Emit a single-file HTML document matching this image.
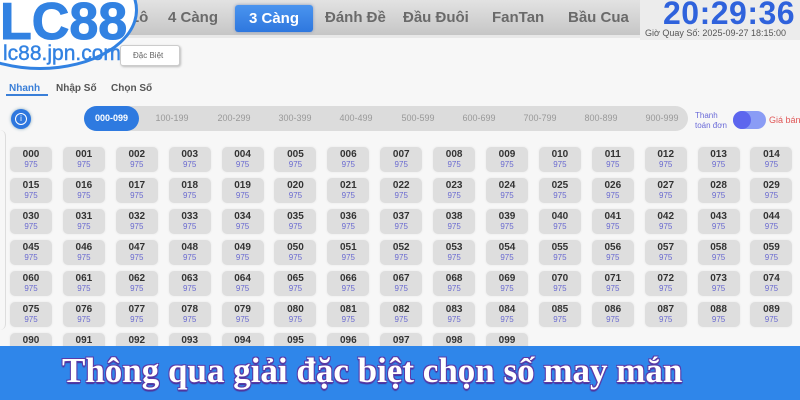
<!DOCTYPE html>
<html><head><meta charset="utf-8"><style>
*{margin:0;padding:0;box-sizing:border-box}
body{width:800px;height:400px;overflow:hidden;background:#f7f7f7;font-family:"Liberation Sans",Arial,sans-serif;position:relative}
.nav{position:absolute;left:0;top:0;width:640px;height:38px;background:linear-gradient(#e2e2e2,#c6c6c6);border-bottom:3px solid #e8e8e8}
.nav span{position:absolute;top:9px;font-size:15px;font-weight:bold;color:#6a6a6a}
.nav .act{top:5px;height:27px;padding:0 14px;line-height:27px;background:linear-gradient(#4a94ef,#2e77de);color:#fff;border-radius:3px;box-shadow:0 0 3px #89b}
.clock{position:absolute;left:640px;top:0;width:160px;height:40px;background:#ececec}
.time{position:absolute;left:23px;top:-5px;font-size:32px;font-weight:bold;color:#2f62dc;letter-spacing:0.5px}
.sub{position:absolute;left:5px;top:28px;font-size:9px;color:#555;white-space:nowrap}
.logo{position:absolute;left:-58px;top:-50px;width:196px;height:120px;border-radius:50%;background:#fff;border:3px solid #3282e2}
.lc{position:absolute;left:0px;top:-8px;font-size:52px;font-weight:bold;color:#3282e2;letter-spacing:0px;-webkit-text-stroke:1px #3282e2}
.url{position:absolute;left:3px;top:42px;font-size:21px;color:#3282e2;-webkit-text-stroke:0.4px #3282e2}
.btn{position:absolute;left:120px;top:45px;width:60px;height:21px;border:1px solid #ccc;border-radius:3px;background:#fff;font-size:8px;color:#666;line-height:20px;padding-left:12px;box-shadow:1px 1px 2px #bbb}
.tabs span{position:absolute;top:83px;font-size:10px;color:#555;font-weight:bold}
.ul{position:absolute;left:6px;top:94px;width:42px;height:2px;background:#3a7fd8}
.info{position:absolute;left:11px;top:109px;width:20px;height:20px;border-radius:50%;background:#2e77de;box-shadow:0 0 3px #8ab;color:#fff;font-size:8px;text-align:center;line-height:20px}
.info:after{content:"";position:absolute;left:4px;top:4px;width:10px;height:10px;border:1px solid #fff;border-radius:50%}
.range{position:absolute;left:84px;top:106px;width:604px;height:25px;border-radius:13px;background:#dcdcdc}
.range span{position:absolute;top:7px;font-size:9px;color:#999;width:60px;text-align:center}
.range .on{left:0;top:0;width:55px;height:25px;line-height:25px;border-radius:13px;background:#2e7ae0;color:#fff;font-weight:bold}
.tt{position:absolute;left:695px;top:111px;font-size:8px;color:#6a6ad8;line-height:10px}
.tog{position:absolute;left:733px;top:111px;width:33px;height:18px;border-radius:9px;background:#8a9cf5}
.tog:after{content:"";position:absolute;left:0;top:0;width:18px;height:18px;border-radius:50%;background:#5d66ee}
.gb{position:absolute;left:769px;top:115px;font-size:9px;color:#e05858;white-space:nowrap}
.grid{position:absolute;left:10px;top:147px;display:grid;grid-template-columns:repeat(15,42px);column-gap:10.9px;row-gap:6px}
.grid div{height:25px;background:#dedede;border-radius:5px;text-align:center;box-shadow:0 0 2px #e6e6e6}
.grid b{display:block;font-size:10px;color:#333;padding-top:2px;line-height:11px}
.grid i{display:block;font-style:normal;font-size:8px;color:#6a6ad0;line-height:9px}
.side{position:absolute;left:0;top:130px;width:6px;height:200px;border-right:1px solid #ddd;border-radius:0 6px 6px 0}
.banner{position:absolute;left:0;top:346px;width:800px;height:54px;background:#2f86ea}
.banner p{position:absolute;left:62px;top:5px;font-family:"Liberation Serif",serif;font-weight:bold;font-size:35px;color:#fff;text-shadow:-1px -1px 0 #5a3aa8,1px -1px 0 #5a3aa8,-1px 1px 0 #5a3aa8,1px 1px 0 #5a3aa8,0 2px 1px #4a2a90;white-space:nowrap}
</style></head><body>
<div class="nav">
<span style="left:130px">Lô</span>
<span style="left:168px">4 Càng</span>
<span class="act" style="left:235px">3 Càng</span>
<span style="left:325px">Đánh Đề</span>
<span style="left:403px">Đầu Đuôi</span>
<span style="left:492px">FanTan</span>
<span style="left:568px">Bầu Cua</span>
</div>
<div class="clock"><div class="time">20:29:36</div><div class="sub">Giờ Quay Số: 2025-09-27 18:15:00</div></div>
<div class="btn">Đặc Biệt</div>
<div class="logo"><div style="position:absolute;left:55px;top:47px"><div class="lc">LC88</div><div class="url">lc88.jpn.com</div></div></div>
<div class="tabs"><span style="left:9px;color:#3a7fd8">Nhanh</span><span style="left:56px">Nhập Số</span><span style="left:111px">Chọn Số</span></div>
<div class="ul"></div>
<div class="info">i</div>
<div class="range"><span class="on">000-099</span><span style="left:58px">100-199</span><span style="left:120px">200-299</span><span style="left:181px">300-399</span><span style="left:242px">400-499</span><span style="left:304px">500-599</span><span style="left:365px">600-699</span><span style="left:426px">700-799</span><span style="left:487px">800-899</span><span style="left:548px">900-999</span></div>
<div class="tt">Thanh<br>toán đơn</div><div class="tog"></div><div class="gb">Giá bán</div>
<div class="side"></div>
<div class="grid">
<div><b>000</b><i>975</i></div><div><b>001</b><i>975</i></div><div><b>002</b><i>975</i></div><div><b>003</b><i>975</i></div><div><b>004</b><i>975</i></div><div><b>005</b><i>975</i></div><div><b>006</b><i>975</i></div><div><b>007</b><i>975</i></div><div><b>008</b><i>975</i></div><div><b>009</b><i>975</i></div><div><b>010</b><i>975</i></div><div><b>011</b><i>975</i></div><div><b>012</b><i>975</i></div><div><b>013</b><i>975</i></div><div><b>014</b><i>975</i></div>
<div><b>015</b><i>975</i></div><div><b>016</b><i>975</i></div><div><b>017</b><i>975</i></div><div><b>018</b><i>975</i></div><div><b>019</b><i>975</i></div><div><b>020</b><i>975</i></div><div><b>021</b><i>975</i></div><div><b>022</b><i>975</i></div><div><b>023</b><i>975</i></div><div><b>024</b><i>975</i></div><div><b>025</b><i>975</i></div><div><b>026</b><i>975</i></div><div><b>027</b><i>975</i></div><div><b>028</b><i>975</i></div><div><b>029</b><i>975</i></div>
<div><b>030</b><i>975</i></div><div><b>031</b><i>975</i></div><div><b>032</b><i>975</i></div><div><b>033</b><i>975</i></div><div><b>034</b><i>975</i></div><div><b>035</b><i>975</i></div><div><b>036</b><i>975</i></div><div><b>037</b><i>975</i></div><div><b>038</b><i>975</i></div><div><b>039</b><i>975</i></div><div><b>040</b><i>975</i></div><div><b>041</b><i>975</i></div><div><b>042</b><i>975</i></div><div><b>043</b><i>975</i></div><div><b>044</b><i>975</i></div>
<div><b>045</b><i>975</i></div><div><b>046</b><i>975</i></div><div><b>047</b><i>975</i></div><div><b>048</b><i>975</i></div><div><b>049</b><i>975</i></div><div><b>050</b><i>975</i></div><div><b>051</b><i>975</i></div><div><b>052</b><i>975</i></div><div><b>053</b><i>975</i></div><div><b>054</b><i>975</i></div><div><b>055</b><i>975</i></div><div><b>056</b><i>975</i></div><div><b>057</b><i>975</i></div><div><b>058</b><i>975</i></div><div><b>059</b><i>975</i></div>
<div><b>060</b><i>975</i></div><div><b>061</b><i>975</i></div><div><b>062</b><i>975</i></div><div><b>063</b><i>975</i></div><div><b>064</b><i>975</i></div><div><b>065</b><i>975</i></div><div><b>066</b><i>975</i></div><div><b>067</b><i>975</i></div><div><b>068</b><i>975</i></div><div><b>069</b><i>975</i></div><div><b>070</b><i>975</i></div><div><b>071</b><i>975</i></div><div><b>072</b><i>975</i></div><div><b>073</b><i>975</i></div><div><b>074</b><i>975</i></div>
<div><b>075</b><i>975</i></div><div><b>076</b><i>975</i></div><div><b>077</b><i>975</i></div><div><b>078</b><i>975</i></div><div><b>079</b><i>975</i></div><div><b>080</b><i>975</i></div><div><b>081</b><i>975</i></div><div><b>082</b><i>975</i></div><div><b>083</b><i>975</i></div><div><b>084</b><i>975</i></div><div><b>085</b><i>975</i></div><div><b>086</b><i>975</i></div><div><b>087</b><i>975</i></div><div><b>088</b><i>975</i></div><div><b>089</b><i>975</i></div>
<div><b>090</b><i>975</i></div><div><b>091</b><i>975</i></div><div><b>092</b><i>975</i></div><div><b>093</b><i>975</i></div><div><b>094</b><i>975</i></div><div><b>095</b><i>975</i></div><div><b>096</b><i>975</i></div><div><b>097</b><i>975</i></div><div><b>098</b><i>975</i></div><div><b>099</b><i>975</i></div>
</div>
<div class="banner"><p>Thông qua giải đặc biệt chọn số may mắn</p></div>
</body></html>
